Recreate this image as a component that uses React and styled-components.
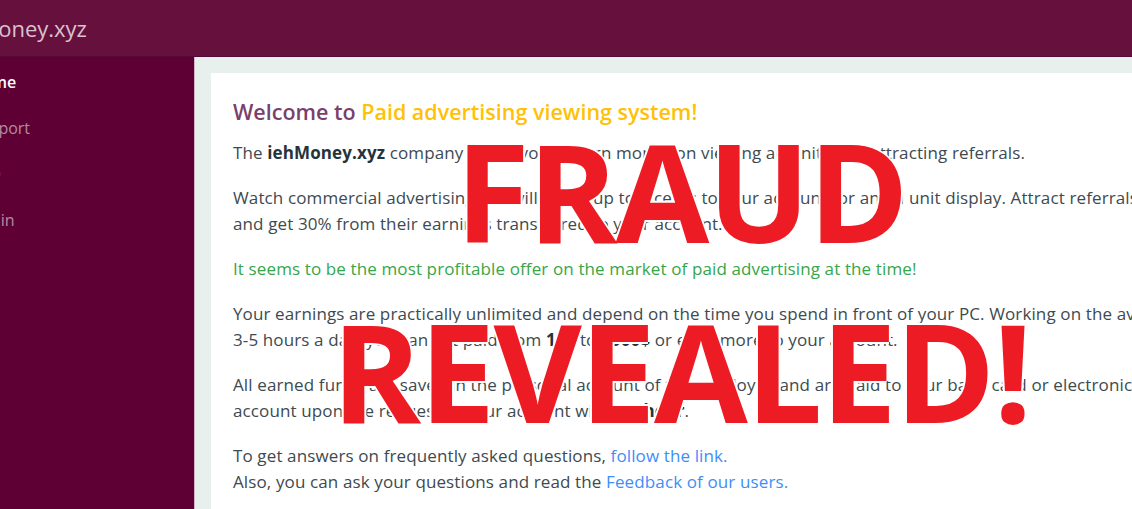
import React from 'react';
import styled, { createGlobalStyle } from 'styled-components';

const GlobalStyle = createGlobalStyle`
    html, body {
        margin: 0;
        padding: 0;
        overflow: hidden;
        background: #e8f0ee;
    }
`;

const Viewport = styled.div`
    position: relative;
    width: 1132px;
    height: 509px;
    overflow: hidden;
    font-family: "Open Sans", "Noto Sans", sans-serif;
`;

const Shell = styled.div`
    margin-left: -60px;
    width: 1320px;
`;

const TopBar = styled.header`
    display: flex;
    align-items: center;
    height: 56px;
    padding-left: 7px;
    background: #66103e;
    border-bottom: 1px solid #55093a;
`;

const Brand = styled.span`
    font-size: 22px;
    color: #d9c3cf;
`;

const Layout = styled.div`
    display: flex;
    align-items: stretch;
    height: 452px;
`;

const Sidebar = styled.nav`
    flex-shrink: 0;
    width: 254px;
    padding-top: 2px;
    background: #5e0034;
    border-right: 1px solid #cdb8c3;
`;

const NavItem = styled.div`
    padding-left: 30px;
    line-height: 46px;
    font-size: 16px;
    font-weight: ${props => props.$active ? 600 : 400};
    color: ${props => props.$active ? '#ffffff' : 'rgba(255,255,255,0.55)'};
`;

const Main = styled.main`
    flex: 1;
    padding: 16px 0 0 16px;
    background: #e8f0ee;
`;

const Card = styled.section`
    width: 1020px;
    height: 100%;
    padding: 24px 22px 22px;
    background: #ffffff;
`;

const Title = styled.h2`
    margin: 0 0 13px;
    font-size: 21.5px;
    font-weight: 600;
    line-height: 30px;
    color: #7b3f6c;
`;

const Accent = styled.span`
    color: #ffc107;
`;

const Para = styled.p`
    margin: 0 0 19px;
    font-size: 17px;
    letter-spacing: 0.12px;
    line-height: 26px;
    white-space: nowrap;
    color: ${props => props.$tone === 'green' ? '#35a64a' : '#3d4a50'};
`;

const Strong = styled.b`
    font-weight: 700;
    color: #26343a;
`;

const Link = styled.a`
    color: #3d8ef8;
    text-decoration: none;
`;

const Stamp = styled.div`
    position: absolute;
    top: 101px;
    left: 230px;
    right: 0;
    text-align: center;
    font-family: "Open Sans", "Noto Sans", sans-serif;
    font-size: 136px;
    font-weight: 700;
    line-height: 180px;
    letter-spacing: -2px;
    color: #ed1c24;
    text-shadow: 2px 0 #fff, -2px 0 #fff, 0 2px #fff, 0 -2px #fff;
    pointer-events: none;
`;

const navItems = [
    {label: 'Home', active: true},
    {label: 'Support'},
    {label: 'FAQ'},
    {label: 'Log in'},
];

const App = () => {
    return (
        <Viewport>
            <GlobalStyle/>
            <Shell>
                <TopBar>
                    <Brand>iehMoney.xyz</Brand>
                </TopBar>
                <Layout>
                    <Sidebar>
                        {navItems.map(item =>
                            <NavItem key={item.label} $active={item.active}>{item.label}</NavItem>
                        )}
                    </Sidebar>
                    <Main>
                        <Card>
                            <Title>Welcome to <Accent>Paid advertising viewing system!</Accent></Title>
                            <Para>
                                The <Strong>iehMoney.xyz</Strong> company offers you to earn money on viewing ad units and attracting referrals.
                            </Para>
                            <Para>
                                Watch commercial advertising, we will credit up to 6 cents to your account for an ad unit display. Attract referrals<br/>
                                and get 30% from their earnings transferred to your account.
                            </Para>
                            <Para $tone="green">
                                It seems to be the most profitable offer on the market of paid advertising at the time!
                            </Para>
                            <Para>
                                Your earnings are practically unlimited and depend on the time you spend in front of your PC. Working on the average<br/>
                                3-5 hours a day, you can get paid from <Strong>10$</Strong> to <Strong>1000$</Strong> or even more to your account.
                            </Para>
                            <Para>
                                All earned funds are saved in the personal account of the employee and are paid to your bank card or electronic<br/>
                                account upon the request of your account within <Strong>1 hour</Strong>.
                            </Para>
                            <Para>
                                To get answers on frequently asked questions, <Link href="#">follow the link.</Link><br/>
                                Also, you can ask your questions and read the <Link href="#">Feedback of our users.</Link>
                            </Para>
                        </Card>
                    </Main>
                </Layout>
            </Shell>
            <Stamp>
                FRAUD<br/>
                REVEALED!
            </Stamp>
        </Viewport>
    );
};

export default App;
